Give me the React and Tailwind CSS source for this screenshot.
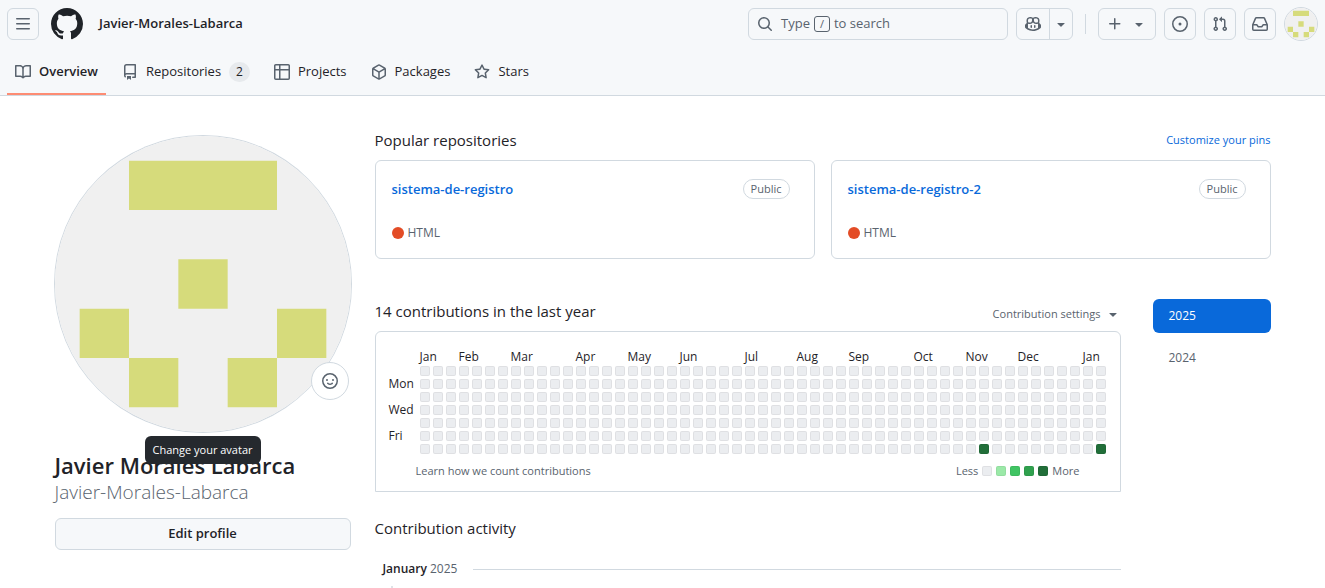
import { useState } from "react";

const ICONS = {
    bars: "M1 2.75A.75.75 0 0 1 1.75 2h12.5a.75.75 0 0 1 0 1.5H1.75A.75.75 0 0 1 1 2.75Zm0 5A.75.75 0 0 1 1.75 7h12.5a.75.75 0 0 1 0 1.5H1.75A.75.75 0 0 1 1 7.75ZM1.75 12h12.5a.75.75 0 0 1 0 1.5H1.75a.75.75 0 0 1 0-1.5Z",
    github: "M8 0c4.42 0 8 3.58 8 8a8.013 8.013 0 0 1-5.45 7.59c-.4.08-.55-.17-.55-.38 0-.27.01-1.13.01-2.2 0-.75-.25-1.23-.54-1.48 1.78-.2 3.65-.88 3.65-3.95 0-.88-.31-1.59-.82-2.15.08-.2.36-1.02-.08-2.12 0 0-.67-.22-2.2.82-.64-.18-1.32-.27-2-.27-.68 0-1.36.09-2 .27-1.53-1.03-2.2-.82-2.2-.82-.44 1.1-.16 1.92-.08 2.12-.51.56-.82 1.28-.82 2.15 0 3.06 1.86 3.75 3.64 3.95-.23.2-.44.55-.51 1.07-.46.21-1.61.55-2.33-.66-.15-.24-.6-.83-1.23-.82-.67.01-.27.38.01.53.34.19.73.9.82 1.13.16.45.68 1.31 2.69.94 0 .67.01 1.3.01 1.49 0 .21-.15.45-.55.38A7.995 7.995 0 0 1 0 8c0-4.42 3.58-8 8-8Z",
    search: "M10.68 11.74a6 6 0 0 1-7.922-8.982 6 6 0 0 1 8.982 7.922l3.04 3.04a.749.749 0 0 1-.326 1.275.749.749 0 0 1-.734-.215ZM11.5 7a4.499 4.499 0 1 0-8.997 0A4.499 4.499 0 0 0 11.5 7Z",
    copilot:
        "M7.998 15.035c-4.562 0-7.873-2.914-7.998-3.749V9.338c.085-.628.677-1.686 1.588-2.065.013-.07.024-.143.036-.218.029-.183.06-.384.126-.612-.201-.508-.254-1.084-.254-1.656 0-.87.128-1.769.693-2.484.579-.733 1.494-1.124 2.724-1.261 1.206-.134 2.262.034 2.944.765.05.053.096.108.139.165.044-.057.094-.112.143-.165.682-.731 1.738-.899 2.944-.765 1.23.137 2.145.528 2.724 1.261.566.715.693 1.614.693 2.484 0 .572-.053 1.148-.254 1.656.066.228.098.429.126.612.012.076.024.148.037.218.924.385 1.522 1.471 1.591 2.095v1.872c0 .766-3.351 3.795-8.002 3.795Zm0-1.485c2.28 0 4.584-1.11 5.002-1.433V7.862l-.023-.116c-.49.21-1.075.291-1.727.291-1.146 0-2.059-.327-2.71-.991A3.222 3.222 0 0 1 8 6.303a3.24 3.24 0 0 1-.544.743c-.65.664-1.563.991-2.71.991-.652 0-1.236-.081-1.727-.291l-.023.116v4.255c.419.323 2.722 1.433 5.002 1.433ZM6.762 2.83c-.193-.206-.637-.413-1.682-.297-1.019.113-1.479.404-1.713.7-.247.312-.369.789-.369 1.554 0 .793.129 1.171.308 1.371.162.181.519.379 1.442.379.853 0 1.339-.235 1.638-.54.315-.322.527-.827.617-1.553.117-.935-.037-1.395-.241-1.614Zm4.155-.297c-1.044-.116-1.488.091-1.681.297-.204.219-.359.679-.242 1.614.091.726.303 1.231.618 1.553.299.305.784.54 1.638.54.922 0 1.28-.198 1.442-.379.179-.2.308-.578.308-1.371 0-.765-.123-1.242-.37-1.554-.233-.296-.693-.587-1.713-.7ZM6.25 9.037a.75.75 0 0 1 .75.75v1.501a.75.75 0 0 1-1.5 0V9.787a.75.75 0 0 1 .75-.75Zm4.25.75v1.501a.75.75 0 0 1-1.5 0V9.787a.75.75 0 0 1 1.5 0Z",
    triangle: "m4.427 7.427 3.396 3.396a.25.25 0 0 0 .354 0l3.396-3.396A.25.25 0 0 0 11.396 7H4.604a.25.25 0 0 0-.177.427Z",
    plus: "M7.75 2a.75.75 0 0 1 .75.75V7h4.25a.75.75 0 0 1 0 1.5H8.5v4.25a.75.75 0 0 1-1.5 0V8.5H2.75a.75.75 0 0 1 0-1.5H7V2.75A.75.75 0 0 1 7.75 2Z",
    issue: "M8 9.5a1.5 1.5 0 1 0 0-3 1.5 1.5 0 0 0 0 3ZM8 0a8 8 0 1 1 0 16A8 8 0 0 1 8 0ZM1.5 8a6.5 6.5 0 1 0 13 0 6.5 6.5 0 0 0-13 0Z",
    pullRequest:
        "M1.5 3.25a2.25 2.25 0 1 1 3 2.122v5.256a2.251 2.251 0 1 1-1.5 0V5.372A2.25 2.25 0 0 1 1.5 3.25Zm5.677-.177L9.573.677A.25.25 0 0 1 10 .854V2.5h1A2.5 2.5 0 0 1 13.5 5v5.628a2.251 2.251 0 1 1-1.5 0V5a1 1 0 0 0-1-1h-1v1.646a.25.25 0 0 1-.427.177L7.177 3.427a.25.25 0 0 1 0-.354ZM3.75 2.5a.75.75 0 1 0 0 1.5.75.75 0 0 0 0-1.5Zm0 9.5a.75.75 0 1 0 0 1.5.75.75 0 0 0 0-1.5Zm8.25.75a.75.75 0 1 0 1.5 0 .75.75 0 0 0-1.5 0Z",
    inbox: "M2.8 2.06A1.75 1.75 0 0 1 4.41 1h7.18c.7 0 1.333.417 1.61 1.06l2.74 6.395c.04.093.06.194.06.295v4.5A1.75 1.75 0 0 1 14.25 15H1.75A1.75 1.75 0 0 1 0 13.25v-4.5c0-.101.02-.202.06-.295Zm1.61.44a.25.25 0 0 0-.23.152L1.887 8H4.75a.75.75 0 0 1 .6.3L6.625 10h2.75l1.275-1.7a.75.75 0 0 1 .6-.3h2.863L11.82 2.652a.25.25 0 0 0-.23-.152Zm10.09 7h-2.875l-1.275 1.7a.75.75 0 0 1-.6.3h-3.5a.75.75 0 0 1-.6-.3L4.375 9.5H1.5v3.75c0 .138.112.25.25.25h12.5a.25.25 0 0 0 .25-.25Z",
    book: "M0 1.75A.75.75 0 0 1 .75 1h4.253c1.227 0 2.317.59 3 1.501A3.743 3.743 0 0 1 11.006 1h4.245a.75.75 0 0 1 .75.75v10.5a.75.75 0 0 1-.75.75h-4.507a2.25 2.25 0 0 0-1.591.659l-.622.621a.75.75 0 0 1-1.06 0l-.622-.621A2.25 2.25 0 0 0 5.258 13H.75a.75.75 0 0 1-.75-.75Zm7.251 10.324.004-5.073-.002-2.253A2.25 2.25 0 0 0 5.003 2.5H1.5v9h3.757a3.75 3.75 0 0 1 1.994.574ZM8.755 4.75l-.004 7.322a3.752 3.752 0 0 1 1.992-.572H14.5v-9h-3.495a2.25 2.25 0 0 0-2.25 2.25Z",
    repo: "M2 2.5A2.5 2.5 0 0 1 4.5 0h8.75a.75.75 0 0 1 .75.75v12.5a.75.75 0 0 1-.75.75h-2.5a.75.75 0 0 1 0-1.5h1.75v-2h-8a1 1 0 0 0-.714 1.7.75.75 0 1 1-1.072 1.05A2.495 2.495 0 0 1 2 11.5Zm10.5-1h-8a1 1 0 0 0-1 1v6.708A2.486 2.486 0 0 1 4.5 9h8ZM5 12.25a.25.25 0 0 1 .25-.25h3.5a.25.25 0 0 1 .25.25v3.25a.25.25 0 0 1-.4.2l-1.45-1.087a.249.249 0 0 0-.3 0L5.4 15.7a.25.25 0 0 1-.4-.2Z",
    table: "M0 1.75C0 .784.784 0 1.75 0h12.5C15.216 0 16 .784 16 1.75v12.5A1.75 1.75 0 0 1 14.25 16H1.75A1.75 1.75 0 0 1 0 14.25ZM6.5 6.5v8h7.75a.25.25 0 0 0 .25-.25V6.5Zm8-1.5V1.75a.25.25 0 0 0-.25-.25H6.5V5Zm-13 1.5v7.75c0 .138.112.25.25.25H5v-8ZM5 5V1.5H1.75a.25.25 0 0 0-.25.25V5Z",
    package:
        "m8.878.392 5.25 3.045c.54.314.872.89.872 1.514v6.098a1.75 1.75 0 0 1-.872 1.514l-5.25 3.045a1.75 1.75 0 0 1-1.756 0l-5.25-3.045A1.75 1.75 0 0 1 1 11.049V4.951c0-.624.332-1.201.872-1.514L7.122.392a1.75 1.75 0 0 1 1.756 0ZM7.875 1.69l-4.63 2.685L8 7.133l4.755-2.758-4.63-2.685a.248.248 0 0 0-.25 0ZM2.5 5.677v5.372c0 .09.047.171.125.216l4.625 2.683V8.432Zm6.25 8.271 4.625-2.683a.25.25 0 0 0 .125-.216V5.677L8.75 8.432Z",
    star: "M8 .25a.75.75 0 0 1 .673.418l1.882 3.815 4.21.612a.75.75 0 0 1 .416 1.279l-3.046 2.97.719 4.192a.751.751 0 0 1-1.088.791L8 12.347l-3.766 1.98a.75.75 0 0 1-1.088-.79l.72-4.194L.818 6.374a.75.75 0 0 1 .416-1.28l4.21-.611L7.327.668A.75.75 0 0 1 8 .25Zm0 2.445L6.615 5.5a.75.75 0 0 1-.564.41l-3.097.45 2.24 2.184a.75.75 0 0 1 .216.664l-.528 3.084 2.769-1.456a.75.75 0 0 1 .698 0l2.77 1.456-.53-3.084a.75.75 0 0 1 .216-.664l2.24-2.183-3.096-.45a.75.75 0 0 1-.564-.41L8 2.694Z",
    smiley: "M8 0a8 8 0 1 1 0 16A8 8 0 0 1 8 0ZM1.5 8a6.5 6.5 0 1 0 13 0 6.5 6.5 0 0 0-13 0Zm3.82 1.636a.75.75 0 0 1 1.038.175l.007.009c.103.118.22.222.35.31.264.178.683.37 1.285.37.602 0 1.02-.192 1.285-.371.13-.088.247-.192.35-.31l.007-.008a.75.75 0 0 1 1.222.87c-.2.28-.44.5-.735.674-.63.418-1.37.638-2.127.629-.946 0-1.652-.308-2.126-.63a3.331 3.331 0 0 1-.75-.685.75.75 0 0 1 .183-1.044ZM12 7a1 1 0 1 1-2 0 1 1 0 0 1 2 0ZM5 8a1 1 0 1 1 0-2 1 1 0 0 1 0 2Z",
};

const repos = [
    { name: "sistema-de-registro", language: "HTML" },
    { name: "sistema-de-registro-2", language: "HTML" },
];

// weeks = how many columns of the calendar the label covers
const months = [
    { name: "Jan", weeks: 3 },
    { name: "Feb", weeks: 4 },
    { name: "Mar", weeks: 5 },
    { name: "Apr", weeks: 4 },
    { name: "May", weeks: 4 },
    { name: "Jun", weeks: 5 },
    { name: "Jul", weeks: 4 },
    { name: "Aug", weeks: 4 },
    { name: "Sep", weeks: 5 },
    { name: "Oct", weeks: 4 },
    { name: "Nov", weeks: 4 },
    { name: "Dec", weeks: 5 },
    { name: "Jan", weeks: 2 },
];

const weekdays = ["", "Mon", "", "Wed", "", "Fri", ""];
const weeks = Array.from({ length: 53 }, (_, i) => i);
const activeDays = ["6-43", "6-52"];

const levels = ["bg-[#ebedf0]", "bg-[#9be9a8]", "bg-[#40c463]", "bg-[#30a14e]", "bg-[#216e39]"];

function Icon({ name, className = "size-4" }) {
    return (
        <svg viewBox="0 0 16 16" fill="currentColor" aria-hidden="true" className={`${className} shrink-0`}>
            <path d={ICONS[name]} />
        </svg>
    );
}

function Identicon({ className }) {
    return (
        <svg viewBox="0 0 420 420" aria-hidden="true" className={className}>
            <rect width="420" height="420" fill="#f0f0f0" />
            <path
                fill="#d6db7b"
                d="M105 35h210v70H105zM175 175h70v70h-70zM35 245h70v70H35zM315 245h70v70h-70zM105 315h70v70h-70zM245 315h70v70h-70z"
            />
        </svg>
    );
}

function IconButton({ icon, label }) {
    return (
        <button
            aria-label={label}
            className="flex size-8 shrink-0 items-center justify-center rounded-md border border-[#d1d9e0] text-[#59636e]"
        >
            <Icon name={icon} />
        </button>
    );
}

function Header() {
    const tabs = [
        { name: "Overview", icon: "book" },
        { name: "Repositories", icon: "repo", count: 2 },
        { name: "Projects", icon: "table" },
        { name: "Packages", icon: "package" },
        { name: "Stars", icon: "star" },
    ];

    return (
        <header className="border-b border-[#d1d9e0] bg-[#f6f8fa] px-[7px]">
            <div className="flex items-center justify-between gap-4 pt-[7px]">
                <div className="flex items-center">
                    <IconButton icon="bars" label="Open menu" />
                    <a href="#" aria-label="Homepage" className="ml-3">
                        <Icon name="github" className="size-8" />
                    </a>
                    <a href="#" className="ml-4 text-[13px] font-semibold">
                        Javier-Morales-Labarca
                    </a>
                </div>

                <div className="flex items-center gap-2">
                    <button className="flex h-8 w-[260px] items-center rounded-md border border-[#d1d9e0] px-2 text-[13px] text-[#59636e]">
                        <Icon name="search" />
                        <span className="ml-2">Type</span>
                        <kbd className="mx-1 flex size-4 items-center justify-center rounded-[3px] border border-[#59636e] font-[inherit] text-[11px]">
                            /
                        </kbd>
                        <span>to search</span>
                    </button>

                    <div className="flex h-8 rounded-md border border-[#d1d9e0] text-[#59636e]">
                        <button aria-label="Chat with Copilot" className="flex w-8 items-center justify-center">
                            <Icon name="copilot" />
                        </button>
                        <button
                            aria-label="Copilot options"
                            className="flex w-[23px] items-center justify-center border-l border-[#d1d9e0]"
                        >
                            <Icon name="triangle" />
                        </button>
                    </div>

                    <div className="mx-1 h-5 w-px bg-[#d1d9e0]" />

                    <button
                        aria-label="Create new"
                        className="flex h-8 items-center gap-2 rounded-md border border-[#d1d9e0] px-2 text-[#59636e]"
                    >
                        <Icon name="plus" />
                        <Icon name="triangle" />
                    </button>
                    <IconButton icon="issue" label="Issues" />
                    <IconButton icon="pullRequest" label="Pull requests" />
                    <IconButton icon="inbox" label="Notifications" />
                    <button aria-label="Open user menu">
                        <Identicon className="size-[34px] rounded-full border border-[#d1d9e0]" />
                    </button>
                </div>
            </div>

            <nav className="flex h-[54px] gap-2 text-[13px]">
                {tabs.map((tab, i) => (
                    <a
                        key={tab.name}
                        href="#"
                        className={`${i === 0 ? "border-[#fd8c73] font-semibold" : "border-transparent"} flex items-center gap-2 border-b-2 px-2 pt-[10px]`}
                    >
                        <span className="text-[#59636e]">
                            <Icon name={tab.icon} />
                        </span>
                        {tab.name}
                        {tab.count && (
                            <span className="rounded-full bg-[#e7eaed] px-[7px] text-[12px] leading-5 font-medium">
                                {tab.count}
                            </span>
                        )}
                    </a>
                ))}
            </nav>
        </header>
    );
}

function Sidebar() {
    return (
        <aside className="w-[296px] shrink-0">
            <div className="relative mt-2">
                <a href="#" aria-label="Change your avatar">
                    <Identicon className="w-full rounded-full ring-1 ring-[#d1d9e0]" />
                </a>
                <button
                    aria-label="Set status"
                    className="absolute right-[2px] bottom-8 flex size-[38px] items-center justify-center rounded-full border border-[#d1d9e0] bg-white text-[#59636e]"
                >
                    <Icon name="smiley" />
                </button>
                <span
                    role="tooltip"
                    className="absolute top-[300px] left-1/2 -translate-x-1/2 rounded-md bg-[#25292e] px-2 py-[5px] text-[11px] leading-[18px] whitespace-nowrap text-white"
                >
                    Change your avatar
                </span>
            </div>

            <h1 className="mt-[18px]">
                <span className="block text-[22px] leading-[30px] font-semibold">Javier Morales Labarca</span>
                <span className="block text-[19px] leading-6 font-light text-[#59636e]">Javier-Morales-Labarca</span>
            </h1>

            <button className="mt-[14px] h-8 w-full rounded-md border border-[#d1d9e0] bg-[#f6f8fa] text-[13px] font-semibold">
                Edit profile
            </button>
        </aside>
    );
}

function RepoCard({ repo }) {
    return (
        <li className="rounded-md border border-[#d1d9e0] p-4">
            <div className="flex items-center justify-between pr-2">
                <a href="#" className="text-[13px] leading-6 font-semibold text-[#0969da]">
                    {repo.name}
                </a>
                <span className="rounded-full border border-[#d1d9e0] px-[7px] text-[11px] leading-[18px] font-medium text-[#59636e]">
                    Public
                </span>
            </div>
            <p className="mt-[23px] flex items-center gap-1 text-[12px] leading-[18px] text-[#59636e]">
                <span className="size-3 rounded-full bg-[#e34c26]" />
                {repo.language}
            </p>
        </li>
    );
}

function Calendar() {
    return (
        <div className="overflow-hidden rounded-t-md border border-[#d1d9e0] pt-[15px] pb-[11px]">
            <table
                aria-label="Contribution graph"
                className="ml-[10px] w-[723px] table-fixed border-separate border-spacing-[3px] text-[12px]"
            >
                <thead>
                    <tr className="h-[13px]">
                        <td className="w-7 p-0" />
                        {months.map((month, i) => (
                            <th
                                key={i}
                                colSpan={month.weeks}
                                className="p-0 text-left leading-[13px] font-normal whitespace-nowrap"
                            >
                                {month.name}
                            </th>
                        ))}
                    </tr>
                </thead>
                <tbody>
                    {weekdays.map((day, row) => (
                        <tr key={row} className="h-[10px]">
                            <th className="p-0 text-left leading-[10px] font-normal">{day}</th>
                            {weeks.map((week) => (
                                <td
                                    key={week}
                                    className={`${
                                        activeDays.includes(`${row}-${week}`) ? levels[4] : levels[0]
                                    } h-[10px] rounded-[2px] p-0 inset-ring inset-ring-black/5`}
                                />
                            ))}
                        </tr>
                    ))}
                </tbody>
            </table>

            <div className="mt-[5px] flex items-center justify-between px-10 text-[11px] leading-[18px] text-[#59636e]">
                <a href="#">Learn how we count contributions</a>
                <div className="flex items-center gap-1">
                    <span>Less</span>
                    {levels.map((level) => (
                        <span key={level} className={`${level} size-[10px] rounded-[2px] inset-ring inset-ring-black/5`} />
                    ))}
                    <span>More</span>
                </div>
            </div>
        </div>
    );
}

export default function App() {
    const [year, setYear] = useState(2025);

    return (
        <div className="bg-white font-['Open_Sans','Noto_Sans',sans-serif] text-[#1f2328]">
            <Header />

            <main className="mx-auto flex max-w-[1280px] gap-6 px-8 pt-8">
                <Sidebar />

                <div className="min-w-0 flex-1">
                    <div className="mb-2 flex items-center justify-between">
                        <h2 className="text-[15px] leading-6">Popular repositories</h2>
                        <a href="#" className="text-[11px] text-[#0969da]">
                            Customize your pins
                        </a>
                    </div>
                    <ol className="grid grid-cols-2 gap-4">
                        {repos.map((repo) => (
                            <RepoCard key={repo.name} repo={repo} />
                        ))}
                    </ol>

                    <div className="mt-10 flex gap-8">
                        <div className="min-w-0 flex-1">
                            <div className="mb-2 flex items-end justify-between">
                                <h2 className="text-[15px] leading-6">14 contributions in the last year</h2>
                                <button className="flex items-center gap-1 text-[11px] leading-[18px] text-[#59636e]">
                                    Contribution settings
                                    <Icon name="triangle" />
                                </button>
                            </div>

                            <Calendar />

                            <h2 className="mt-6 text-[15px] leading-6">Contribution activity</h2>

                            <h3 className="mt-5 flex items-center gap-4 pl-2 text-[12px] leading-[18px] font-semibold">
                                <span>
                                    January <span className="font-normal text-[#59636e]">2025</span>
                                </span>
                                <span className="h-px flex-1 bg-[#d1d9e0]" />
                            </h3>
                            {/* timeline start */}
                            <div className="mt-2 ml-4 h-[2px] w-[2px] bg-[#dfe3e8]" />
                        </div>

                        <ul className="flex w-[118px] flex-col gap-2 text-[12px]">
                            {[2025, 2024].map((y) => (
                                <li key={y}>
                                    <button
                                        onClick={() => setYear(y)}
                                        className={`${
                                            y === year ? "bg-[#0969da] text-white" : "text-[#59636e]"
                                        } h-[34px] w-full rounded-md px-4 text-left`}
                                    >
                                        {y}
                                    </button>
                                </li>
                            ))}
                        </ul>
                    </div>
                </div>
            </main>
        </div>
    );
}
